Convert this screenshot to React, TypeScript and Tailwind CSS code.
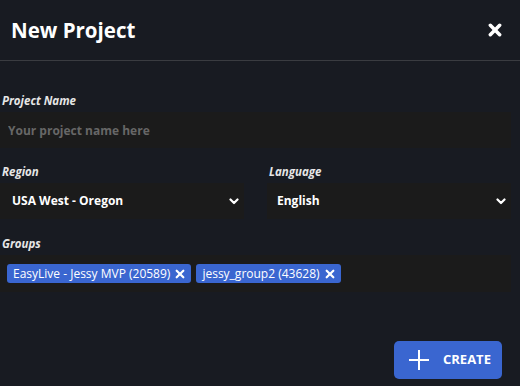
import { useState } from "react"

const groups = ["EasyLive - Jessy MVP (20589)", "jessy_group2 (43628)"]

function Chevron() {
  return (
    <svg width="10" height="7" viewBox="0 0 10 7" fill="none" className="shrink-0">
      <polyline points="1.5,1.5 5,5 8.5,1.5" stroke="white" strokeWidth="2.2" strokeLinecap="round" strokeLinejoin="round" />
    </svg>
  )
}

function Cross({ size, stroke }: { size: number; stroke: number }) {
  return (
    <svg width={size} height={size} viewBox="0 0 12 12" fill="none" className="shrink-0">
      <line x1="2" y1="2" x2="10" y2="10" stroke="white" strokeWidth={stroke} strokeLinecap="round" />
      <line x1="10" y1="2" x2="2" y2="10" stroke="white" strokeWidth={stroke} strokeLinecap="round" />
    </svg>
  )
}

function Label({ children }: { children: string }) {
  return <label className="mb-[4px] block pl-[2px] text-[11.5px] leading-[14px] font-bold italic text-[#e6e6e6]">{children}</label>
}

export default function App() {
  const [name, setName] = useState("")

  return (
    <div className="flex h-[386px] w-[520px] flex-col overflow-hidden bg-[#181b22] text-white" style={{ fontFamily: '"Open Sans", sans-serif' }}>
      <header className="flex h-[61px] shrink-0 items-center justify-between border-b border-[#3a3c41] pr-[18px] pl-[11px]">
        <h1 className="text-[20.5px] font-bold leading-none">New Project</h1>
        <button className="flex h-[14px] w-[14px] items-center justify-center">
          <Cross size={14} stroke={3} />
        </button>
      </header>

      <main className="flex flex-1 flex-col pt-[33px]">
        <div className="w-[511px]">
          <Label>Project Name</Label>
          <input
            value={name}
            onChange={(e) => setName(e.target.value)}
            placeholder="Your project name here"
            className="h-[36px] w-full bg-[#1b1b1b] px-[8px] text-[12px] font-bold text-white outline-none placeholder:text-[#676767]"
          />

          <div className="mt-[17px] grid grid-cols-2 gap-[23px]">
            <div>
              <Label>Region</Label>
              <div className="flex h-[36px] items-center justify-between bg-[#1b1b1b] pr-[5px] pl-[12px] text-[12px] font-bold">
                <span>USA West - Oregon</span>
                <Chevron />
              </div>
            </div>
            <div>
              <Label>Language</Label>
              <div className="flex h-[36px] items-center justify-between bg-[#1b1b1b] pr-[5px] pl-[10px] text-[12px] font-bold">
                <span>English</span>
                <Chevron />
              </div>
            </div>
          </div>

          <div className="mt-[18px]">
            <Label>Groups</Label>
            <div className="flex h-[37px] items-center gap-[5px] bg-[#1b1b1b] pl-[7px]">
              {groups.map((g) => (
                <span key={g} className="flex h-[19px] items-center gap-[5px] rounded-[3px] bg-[#3a66d0] pr-[6px] pl-[6px] text-[12px] leading-none text-white">
                  {g}
                  <Cross size={10} stroke={2.6} />
                </span>
              ))}
            </div>
          </div>
        </div>

        <div className="mt-[49px] flex justify-end pr-[18px]">
          <button className="flex h-[38px] w-[108px] items-center rounded-[5px] bg-[#3a66d0] pl-[15px] text-[13px] font-bold text-white">
            <svg width="20" height="20" viewBox="0 0 20 20" fill="none" className="shrink-0">
              <line x1="10" y1="0" x2="10" y2="20" stroke="white" strokeWidth="2" />
              <line x1="0" y1="10" x2="20" y2="10" stroke="white" strokeWidth="2" />
            </svg>
            <span className="ml-[14px]">CREATE</span>
          </button>
        </div>
      </main>
    </div>
  )
}
